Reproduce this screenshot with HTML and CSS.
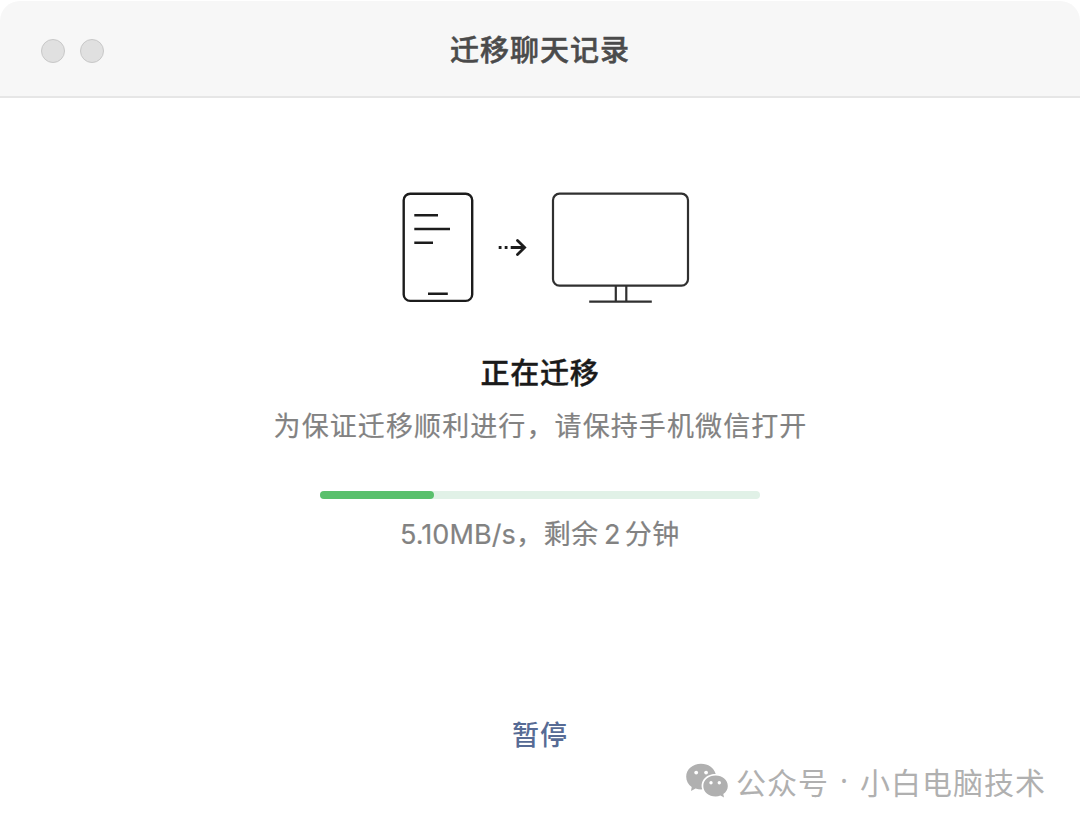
FILE: index.html
```html
<!DOCTYPE html>
<html lang="zh-CN">
<head>
    <meta charset="UTF-8">
    <title>迁移聊天记录</title>
    <link rel="stylesheet" href="styles.css">
</head>
<body>
    <div class="window">
        <header class="titlebar">
            <div class="window-buttons">
                <span class="window-button"></span>
                <span class="window-button"></span>
            </div>
            <h1 class="title">迁移聊天记录</h1>
        </header>

        <main class="content">
            <svg class="devices" width="290" height="114" viewBox="0 0 290 114" fill="none">
                <!-- 手机 -->
                <g stroke="#1c1c1c" stroke-width="2.4">
                    <rect x="3.7" y="3.7" width="68.5" height="107.2" rx="6.5"/>
                    <path d="M14.3 25.2H38M14.3 39H50M14.3 52.7H33M28 103.8H47.8"/>
                </g>
                <!-- 箭头 -->
                <path d="M98.7 57.5h2.8M104.7 57.5h2.8M110.7 57.5H125" stroke="#1c1c1c" stroke-width="3"/>
                <path d="M117.5 50.5L124.6 57.5L117.5 64.5" stroke="#1c1c1c" stroke-width="2.8" stroke-linecap="round"/>
                <!-- 电脑 -->
                <g stroke="#303030" stroke-width="2.2">
                    <rect x="153" y="3.7" width="135" height="92" rx="6.5"/>
                    <path d="M215.8 96V111.5M226.3 96V111.5M189.2 111.6H251.8"/>
                </g>
            </svg>

            <h2 class="heading">正在迁移</h2>
            <p class="hint">为保证迁移顺利进行，请保持手机微信打开</p>

            <div class="progress">
                <div class="progress-bar" style="width: 114px"></div>
            </div>
            <p class="status"><span class="speed">5.10MB/s</span>，剩余<span class="minutes">2</span>分钟</p>

            <button class="pause">暂停</button>
        </main>

        <footer class="watermark">
            <svg class="wechat" width="42" height="36" viewBox="0 0 42 36">
                <path fill="#b0b0b0" d="M15 0.8C6.8 0.8 0.2 6.4 0.2 13.7C0.2 17.8 2.2 21.5 5.7 24L5 28L9.6 25.5C11.3 26.1 13.2 26.4 15.2 26.4L16.3 26.3C13.5 17.6 20.8 10.7 29.7 10.9C28 4.9 22.2 0.8 15 0.8Z"/>
                <path fill="#b0b0b0" d="M29.6 12.4C22.7 12.4 17.3 17 17.3 22.9C17.3 28.8 22.7 33.4 29.6 33.4C31.3 33.4 33 33.1 34.5 32.5L38 34.6L37.3 31.1C40.1 29.1 41.8 26.2 41.8 22.9C41.8 17 36.4 12.4 29.6 12.4Z"/>
                <g fill="#fff">
                    <circle cx="10.2" cy="9.6" r="1.9"/>
                    <circle cx="20.1" cy="9.6" r="1.9"/>
                    <circle cx="25" cy="19.7" r="1.7"/>
                    <circle cx="33.3" cy="19.7" r="1.7"/>
                </g>
            </svg>
            <span class="watermark-label">公众号</span>
            <span class="watermark-dot">·</span>
            <span class="watermark-name">小白电脑技术</span>
        </footer>
    </div>
</body>
</html>
```
FILE: styles.css
```css
* {
    box-sizing: border-box;
}
body {
    margin: 0;
    background: #fff;
    font-family: "Noto Sans CJK SC", sans-serif;
}
h1, h2, p {
    margin: 0;
}
.window {
    display: flex;
    flex-direction: column;
    height: 825px;
    overflow: hidden;
}
.titlebar {
    display: grid;
    grid-template-columns: 1fr auto 1fr;
    align-items: center;
    height: 97px;
    margin-top: 1px;
    padding: 0 41px;
    background: #f7f7f7;
    border-bottom: 2px solid #e6e6e6;
    border-radius: 20px 20px 0 0;
}
.window-buttons {
    display: flex;
    gap: 15px;
    padding-top: 4px;
}
.window-button {
    width: 24px;
    height: 24px;
    background: #e0e0e0;
    border: 1px solid #c8c8c8;
    border-radius: 50%;
}
.title {
    padding-bottom: 2px;
    font-size: 29px;
    font-weight: 500;
    line-height: 40px;
    letter-spacing: 1px;
    color: #4b4b4b;
    -webkit-text-stroke: 0.5px #4b4b4b;
}
.content {
    display: flex;
    flex-direction: column;
    align-items: center;
    padding-top: 92px;
}
.devices {
    margin-left: 10px;
}
.heading {
    margin-top: 47px;
    font-size: 29px;
    font-weight: 500;
    line-height: 40px;
    letter-spacing: 0.8px;
    color: #1a1a1a;
    -webkit-text-stroke: 0.4px #1a1a1a;
}
.hint {
    margin-top: 14px;
    padding-left: 1px;
    font-size: 27px;
    line-height: 40px;
    letter-spacing: 1.1px;
    color: #828282;
    -webkit-text-stroke: 0.2px #828282;
}
.progress {
    width: 440px;
    height: 8px;
    margin-top: 46px;
    background: #e1f1e7;
    border-radius: 4px;
}
.progress-bar {
    height: 8px;
    background: #59c06c;
    border-radius: 4px;
}
.status {
    margin-top: 14px;
    font-size: 27px;
    line-height: 40px;
    letter-spacing: 0.7px;
    color: #828282;
    -webkit-text-stroke: 0.2px #828282;
}
.speed,
.minutes {
    font-family: Inter, sans-serif;
    letter-spacing: 0.1px;
}
.minutes {
    margin: 0 4px 0 5px;
}
.pause {
    margin-top: 159px;
    padding: 0;
    background: none;
    border: none;
    font-family: inherit;
    font-size: 27px;
    font-weight: 500;
    line-height: 40px;
    letter-spacing: 1px;
    color: #576b95;
}
.watermark {
    display: flex;
    align-items: center;
    justify-content: flex-end;
    margin-top: 7px;
    padding-right: 34px;
    font-size: 30px;
    line-height: 40px;
    letter-spacing: 1px;
    color: #b0b0b0;
}
.wechat {
    margin-right: 8px;
}
.watermark-dot {
    width: 31px;
    font-family: "Noto Sans", sans-serif;
    text-align: center;
}
```
